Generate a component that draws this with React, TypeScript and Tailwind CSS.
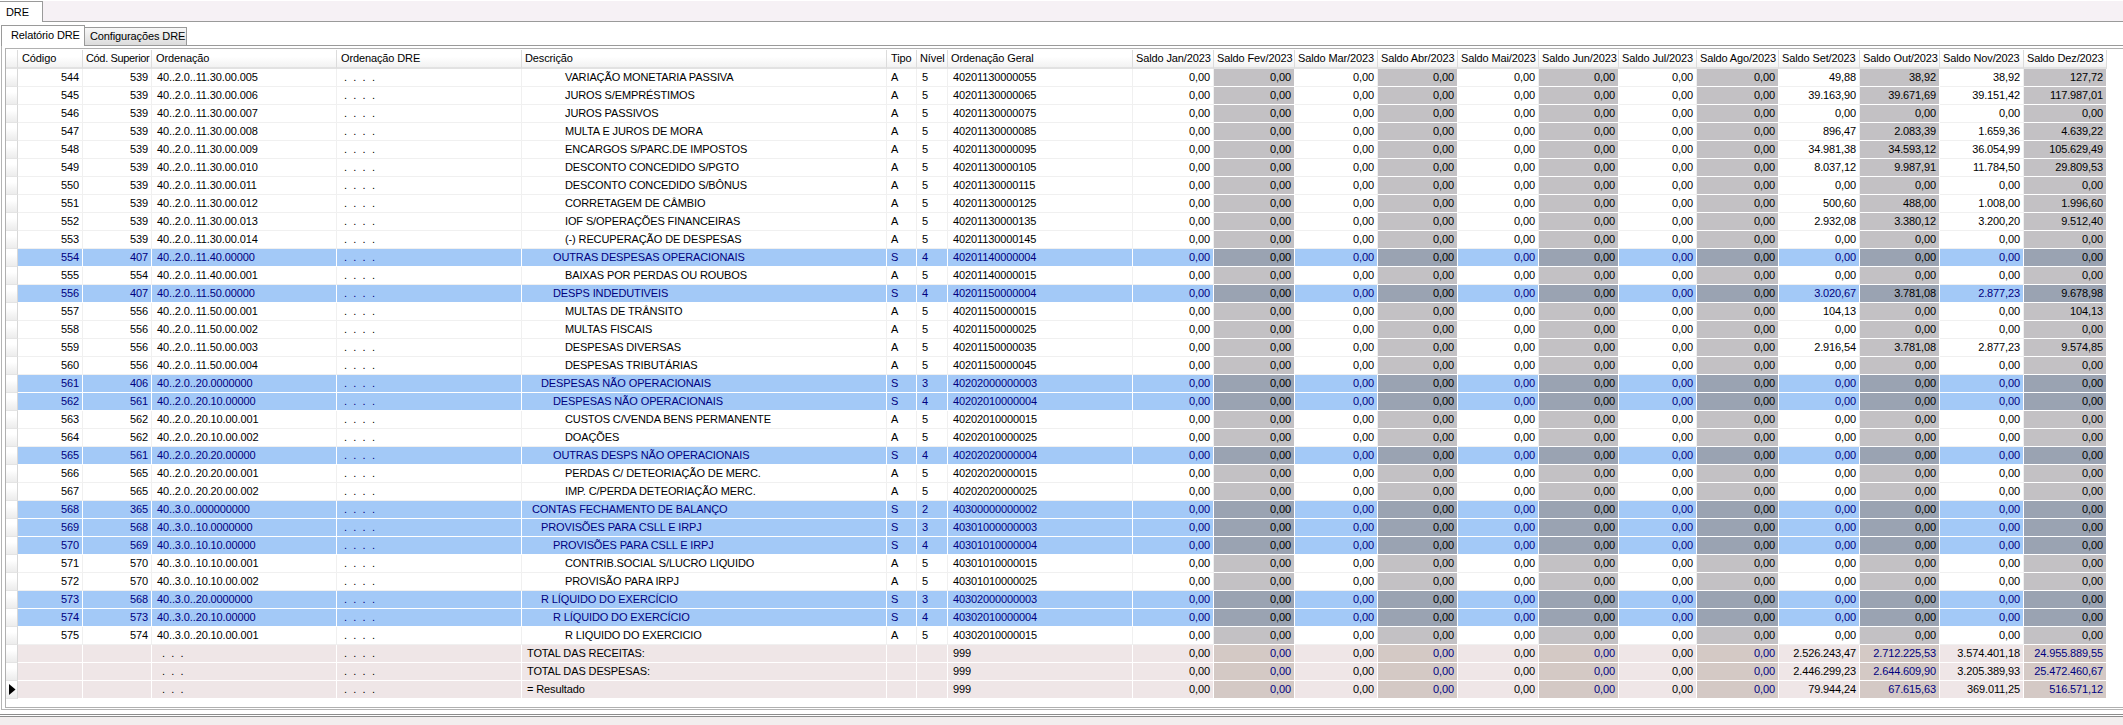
import React from "react";

const rows: [string, string, string, string, string, string, string, string[]?][] = [
  ["544", "539", "40..2.0..11.30.00.005", "VARIAÇÃO MONETARIA PASSIVA", "A", "5", "40201130000055", ["49,88", "38,92", "38,92", "127,72"]],
  ["545", "539", "40..2.0..11.30.00.006", "JUROS S/EMPRÉSTIMOS", "A", "5", "40201130000065", ["39.163,90", "39.671,69", "39.151,42", "117.987,01"]],
  ["546", "539", "40..2.0..11.30.00.007", "JUROS PASSIVOS", "A", "5", "40201130000075"],
  ["547", "539", "40..2.0..11.30.00.008", "MULTA E JUROS DE MORA", "A", "5", "40201130000085", ["896,47", "2.083,39", "1.659,36", "4.639,22"]],
  ["548", "539", "40..2.0..11.30.00.009", "ENCARGOS S/PARC.DE IMPOSTOS", "A", "5", "40201130000095", ["34.981,38", "34.593,12", "36.054,99", "105.629,49"]],
  ["549", "539", "40..2.0..11.30.00.010", "DESCONTO CONCEDIDO S/PGTO", "A", "5", "40201130000105", ["8.037,12", "9.987,91", "11.784,50", "29.809,53"]],
  ["550", "539", "40..2.0..11.30.00.011", "DESCONTO CONCEDIDO S/BÔNUS", "A", "5", "40201130000115"],
  ["551", "539", "40..2.0..11.30.00.012", "CORRETAGEM DE CÂMBIO", "A", "5", "40201130000125", ["500,60", "488,00", "1.008,00", "1.996,60"]],
  ["552", "539", "40..2.0..11.30.00.013", "IOF S/OPERAÇÕES FINANCEIRAS", "A", "5", "40201130000135", ["2.932,08", "3.380,12", "3.200,20", "9.512,40"]],
  ["553", "539", "40..2.0..11.30.00.014", "(-) RECUPERAÇÃO DE DESPESAS", "A", "5", "40201130000145"],
  ["554", "407", "40..2.0..11.40.00000", "OUTRAS DESPESAS OPERACIONAIS", "S", "4", "40201140000004"],
  ["555", "554", "40..2.0..11.40.00.001", "BAIXAS POR PERDAS OU ROUBOS", "A", "5", "40201140000015"],
  ["556", "407", "40..2.0..11.50.00000", "DESPS INDEDUTIVEIS", "S", "4", "40201150000004", ["3.020,67", "3.781,08", "2.877,23", "9.678,98"]],
  ["557", "556", "40..2.0..11.50.00.001", "MULTAS DE TRÂNSITO", "A", "5", "40201150000015", ["104,13", "0,00", "0,00", "104,13"]],
  ["558", "556", "40..2.0..11.50.00.002", "MULTAS FISCAIS", "A", "5", "40201150000025"],
  ["559", "556", "40..2.0..11.50.00.003", "DESPESAS DIVERSAS", "A", "5", "40201150000035", ["2.916,54", "3.781,08", "2.877,23", "9.574,85"]],
  ["560", "556", "40..2.0..11.50.00.004", "DESPESAS TRIBUTÁRIAS", "A", "5", "40201150000045"],
  ["561", "406", "40..2.0..20.0000000", "DESPESAS NÃO OPERACIONAIS", "S", "3", "40202000000003"],
  ["562", "561", "40..2.0..20.10.00000", "DESPESAS NÃO OPERACIONAIS", "S", "4", "40202010000004"],
  ["563", "562", "40..2.0..20.10.00.001", "CUSTOS C/VENDA BENS PERMANENTE", "A", "5", "40202010000015"],
  ["564", "562", "40..2.0..20.10.00.002", "DOAÇÕES", "A", "5", "40202010000025"],
  ["565", "561", "40..2.0..20.20.00000", "OUTRAS DESPS NÃO OPERACIONAIS", "S", "4", "40202020000004"],
  ["566", "565", "40..2.0..20.20.00.001", "PERDAS C/ DETEORIAÇÃO DE MERC.", "A", "5", "40202020000015"],
  ["567", "565", "40..2.0..20.20.00.002", "IMP. C/PERDA DETEORIAÇÃO MERC.", "A", "5", "40202020000025"],
  ["568", "365", "40..3.0..000000000", "CONTAS FECHAMENTO DE BALANÇO", "S", "2", "40300000000002"],
  ["569", "568", "40..3.0..10.0000000", "PROVISÕES PARA CSLL E IRPJ", "S", "3", "40301000000003"],
  ["570", "569", "40..3.0..10.10.00000", "PROVISÕES PARA CSLL E IRPJ", "S", "4", "40301010000004"],
  ["571", "570", "40..3.0..10.10.00.001", "CONTRIB.SOCIAL S/LUCRO LIQUIDO", "A", "5", "40301010000015"],
  ["572", "570", "40..3.0..10.10.00.002", "PROVISÃO PARA IRPJ", "A", "5", "40301010000025"],
  ["573", "568", "40..3.0..20.0000000", "R LÍQUIDO DO EXERCÍCIO", "S", "3", "40302000000003"],
  ["574", "573", "40..3.0..20.10.00000", "R LÍQUIDO DO EXERCÍCIO", "S", "4", "40302010000004"],
  ["575", "574", "40..3.0..20.10.00.001", "R LIQUIDO DO EXERCICIO", "A", "5", "40302010000015"],
];

const totals: [string, string[]][] = [
  ["TOTAL DAS RECEITAS:", ["2.526.243,47", "2.712.225,53", "3.574.401,18", "24.955.889,55"]],
  ["TOTAL DAS DESPESAS:", ["2.446.299,23", "2.644.609,90", "3.205.389,93", "25.472.460,67"]],
  ["= Resultado", ["79.944,24", "67.615,63", "369.011,25", "516.571,12"]],
];

const headers: [string, string][] = [
  ["Código", "pl-[4px]"],
  ["Cód. Superior", "pl-[3px] tracking-[-0.35px]"],
  ["Ordenação", "pl-[4px]"],
  ["Ordenação DRE", "pl-[4px]"],
  ["Descrição", "pl-[3px]"],
  ["Tipo", "pl-[4px]"],
  ["Nível", "pl-[3px]"],
  ["Ordenação Geral", "pl-[3px]"],
  ["Saldo Jan/2023", "pl-[3px]"],
  ["Saldo Fev/2023", "pl-[3px]"],
  ["Saldo Mar/2023", "pl-[3px]"],
  ["Saldo Abr/2023", "pl-[3px]"],
  ["Saldo Mai/2023", "pl-[3px]"],
  ["Saldo Jun/2023", "pl-[3px]"],
  ["Saldo Jul/2023", "pl-[3px]"],
  ["Saldo Ago/2023", "pl-[3px]"],
  ["Saldo Set/2023", "pl-[3px]"],
  ["Saldo Out/2023", "pl-[3px]"],
  ["Saldo Nov/2023", "pl-[3px]"],
  ["Saldo Dez/2023", "pl-[3px]"],
];

const gridCols =
  "grid grid-cols-[12px_65px_69px_185px_185px_365px_30px_31px_185px_81px_81px_83px_80px_81px_80px_78px_82px_81px_80px_84px_83px]";

const indent: Record<string, string> = {
  "5": "pl-[43px]",
  "4": "pl-[31px]",
  "3": "pl-[19px]",
  "2": "pl-[10px]",
};

type Kind = "white" | "blue" | "total";
const base: Record<Kind, string> = {
  white: "bg-white text-black border-[#f0f0f0]",
  blue: "bg-[#a3c9f7] text-[#000080] border-white",
  total: "bg-[#efe6e7] text-black border-white",
};
const dark: Record<Kind, string> = {
  white: "bg-[#c3c1c4] text-black border-white",
  blue: "bg-[#9aa3b2] text-black border-white",
  total: "bg-[#d4c9c5] text-[#000080] border-white",
};

const cell = "h-[18px] border-r border-b leading-[17px] whitespace-nowrap overflow-hidden";

function Indicator({ active }: { active?: boolean }) {
  return (
    <div className="relative h-[18px] border-b border-r border-b-[#e4e4e4] border-r-[#d8d8d8] bg-linear-to-b from-white from-30% to-[#ececec]">
      {active && (
        <svg className="absolute left-[3px] top-[3px]" width="7" height="11" viewBox="0 0 7 11">
          <path d="M0 0 L6.5 5.5 L0 11 Z" fill="#000" />
        </svg>
      )}
    </div>
  );
}

function Months({ kind, values }: { kind: Kind; values?: string[] }) {
  const all = [...Array(8).fill("0,00"), ...(values ?? ["0,00", "0,00", "0,00", "0,00"])];
  return (
    <>
      {all.map((v, i) => (
        <div key={i} className={`${cell} pr-[3px] text-right ${i % 2 ? dark[kind] : base[kind]}`}>
          {v}
        </div>
      ))}
    </>
  );
}

function DataRow({ r }: { r: (typeof rows)[number] }) {
  const kind: Kind = r[4] === "S" ? "blue" : "white";
  const b = base[kind];
  return (
    <div className={gridCols}>
      <Indicator />
      <div className={`${cell} ${b} pr-[3px] text-right`}>{r[0]}</div>
      <div className={`${cell} ${b} pr-[3px] text-right`}>{r[1]}</div>
      <div className={`${cell} ${b} pl-[5px]`}>{r[2]}</div>
      <div className={`${cell} ${b} pl-[7px] tracking-[1.6px]`}>. . . .</div>
      <div className={`${cell} ${b} ${indent[r[5]]}`}>{r[3]}</div>
      <div className={`${cell} ${b} pl-[4px]`}>{r[4]}</div>
      <div className={`${cell} ${b} pl-[5px]`}>{r[5]}</div>
      <div className={`${cell} ${b} pl-[5px]`}>{r[6]}</div>
      <Months kind={kind} values={r[7]} />
    </div>
  );
}

function TotalRow({ t, active }: { t: (typeof totals)[number]; active?: boolean }) {
  const b = base.total;
  return (
    <div className={gridCols}>
      <Indicator active={active} />
      <div className={`${cell} ${b}`} />
      <div className={`${cell} ${b}`} />
      <div className={`${cell} ${b} pl-[10px] tracking-[1.6px]`}>. . .</div>
      <div className={`${cell} ${b} pl-[7px] tracking-[1.6px]`}>. . . .</div>
      <div className={`${cell} ${b} pl-[5px]`}>{t[0]}</div>
      <div className={`${cell} ${b}`} />
      <div className={`${cell} ${b}`} />
      <div className={`${cell} ${b} pl-[5px]`}>999</div>
      <Months kind="total" values={t[1]} />
    </div>
  );
}

export default function App() {
  return (
    <div className="flex h-[725px] w-[2123px] flex-col overflow-hidden bg-white font-['Liberation_Sans',sans-serif] text-[11px] tracking-[-0.12px] text-black">
      {/* Top tab strip */}
      <div className="mt-px flex h-[21px] shrink-0 border-b border-[#9a9a9a] bg-[#f6f1f5]">
        <div className="-mb-px flex h-[21px] w-[43px] items-center border-t border-r border-[#9a9a9a] bg-white pl-[6px] pt-px">
          DRE
        </div>
      </div>

      {/* Page with inner tabs */}
      <div className="ml-px mt-[3px] flex min-h-0 flex-1 flex-col">
        <div className="flex h-[21px] shrink-0 items-end border-b border-[#9a9a9a]">
          <div className="-mb-px flex h-[21px] w-[84px] items-center whitespace-nowrap border-x border-t border-[#9a9a9a] bg-white pl-[9px] pb-[2px]">
            Relatório DRE
          </div>
          <div className="flex h-[18px] w-[102px] items-center whitespace-nowrap border-t border-r border-[#9a9a9a] bg-linear-to-b from-[#f8f8f8] to-[#dcdcdc] pl-[5px]">
            Configurações DRE
          </div>
        </div>

        <div className="flex h-[664px] shrink-0 flex-col border-b border-l border-[#b4b4b4] pl-[3px] pt-[2px]">
          {/* Grid box */}
          <div className="flex h-[660px] flex-col border-y border-l border-[#b0b0b0] pt-px">
            <div className={gridCols}>
              <div className="h-[19px] border-r border-b-2 border-r-[#dcdcdc] border-b-[#e2e2e2] bg-linear-to-b from-white from-30% to-[#f0f0f0]" />
              {headers.map(([h, p]) => (
                <div
                  key={h}
                  className={`h-[19px] border-r border-b-2 border-r-[#dcdcdc] border-b-[#e2e2e2] bg-linear-to-b from-white from-40% to-[#f2f2f2] leading-[16px] whitespace-nowrap overflow-hidden ${p}`}
                >
                  {h}
                </div>
              ))}
            </div>
            {rows.map((r) => (
              <DataRow key={r[0]} r={r} />
            ))}
            {totals.map((t, i) => (
              <TotalRow key={t[0]} t={t} active={i === 2} />
            ))}
          </div>
        </div>

        <div className="mt-[4px] h-[3px] shrink-0 -ml-px border-y border-[#8c8c8c]" />
      </div>
      <div className="h-[8px] shrink-0 bg-[#f2eeee]" />
    </div>
  );
}
